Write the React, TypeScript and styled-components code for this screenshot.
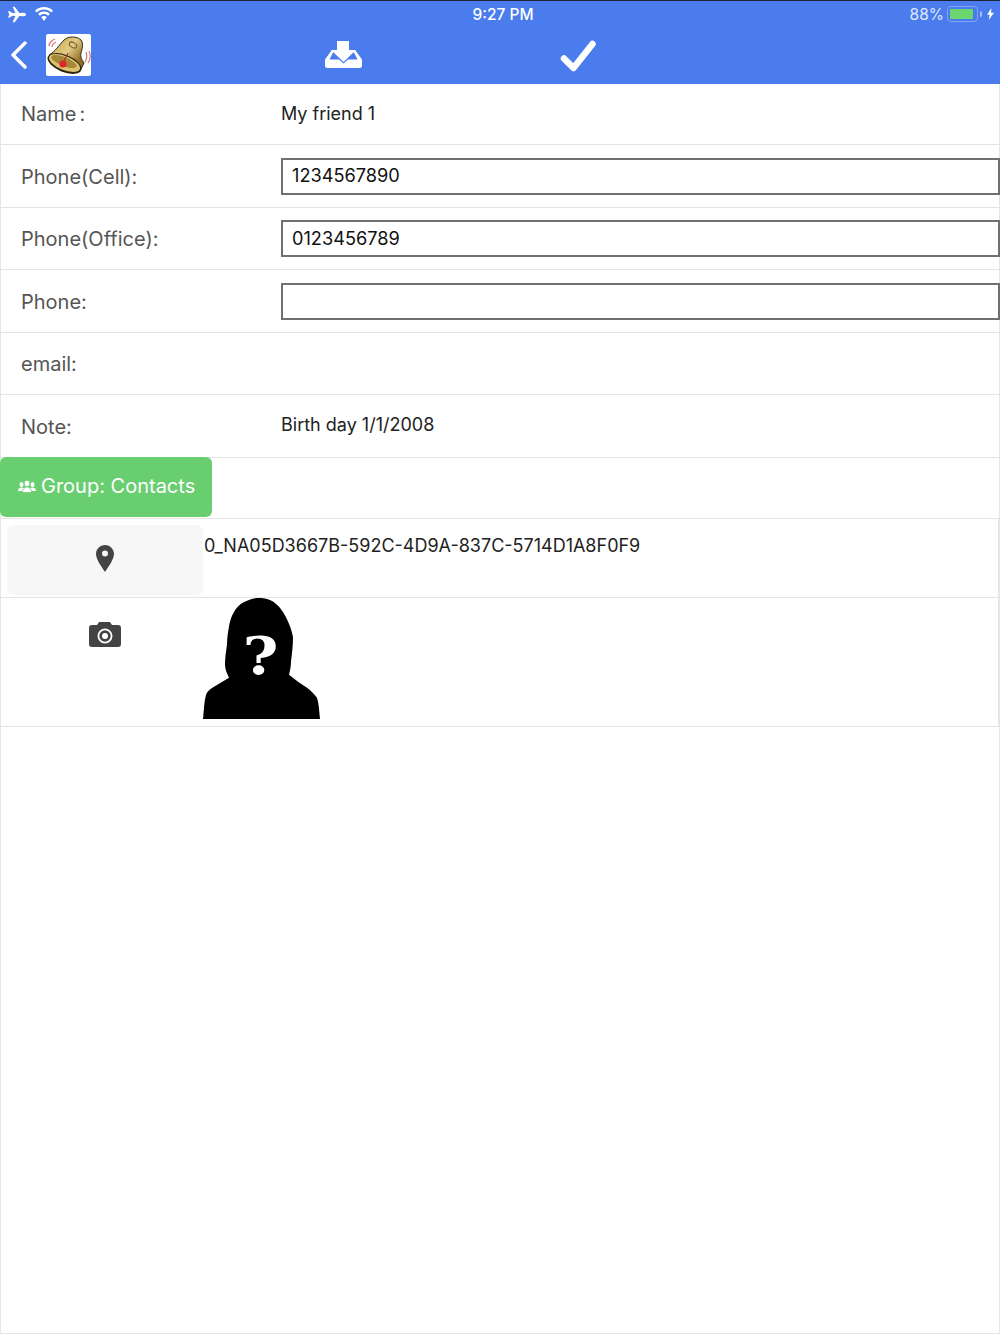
import styled, { createGlobalStyle } from 'styled-components';

const GlobalStyle = createGlobalStyle`
  html, body {
    margin: 0;
    padding: 0;
    background: #fff;
    font-family: "Inter", "Liberation Sans", sans-serif;
  }
  * {
    box-sizing: border-box;
  }
`;

const Page = styled.div`
  width: 1000px;
  height: 1334px;
  border-left: 1px solid #e6e6e6;
  border-right: 1px solid #e6e6e6;
  border-bottom: 1px solid #e6e6e6;
`;

const Header = styled.header`
  margin: 0 -1px;
  height: 84px;
  background-color: #4a7cee;
  border-top: 1px solid #1c2233;
  color: #fff;
`;

const StatusBar = styled.div`
  display: grid;
  grid-template-columns: 1fr auto 1fr;
  align-items: center;
  height: 26px;
  padding: 0 7px 0 8px;
  font-size: 15.5px;
`;

const StatusLeft = styled.div`
  display: flex;
  align-items: center;
  gap: 9px;
`;

const StatusTime = styled.div`
  margin-left: 5px;
  font-weight: 500;
`;

const StatusRight = styled.div`
  display: flex;
  align-items: center;
  justify-content: flex-end;
  gap: 4px;
  color: #dfe8fc;
`;

const BatteryLevel = styled.span`
  margin-right: -1px;
`;

const Battery = styled.div`
  position: relative;
  width: 31px;
  height: 16px;
  margin-right: 1px;
  padding: 2px;
  border: 1.5px solid #86a6f3;
  border-radius: 4px;

  &::before {
    content: '';
    display: block;
    width: 90%;
    height: 100%;
    background-color: #6cd66e;
    border-radius: 1px;
  }

  &::after {
    content: '';
    position: absolute;
    top: 3.5px;
    right: -5px;
    width: 2px;
    height: 6px;
    background-color: #a9c0f6;
    border-radius: 0 2px 2px 0;
  }
`;

const BoltIcon = styled.svg`
  width: 7px;
  height: 12px;
  margin-left: 4px;
  margin-right: -1px;
`;

const Toolbar = styled.div`
  display: flex;
  align-items: center;
  height: 57px;
  padding: 0 0 3px 10px;
`;

const BackIcon = styled.svg`
  width: 18px;
  height: 28px;
  margin: 2px 18px 0 0;
`;

const AppIcon = styled.svg`
  width: 45px;
  height: 42px;
  margin: 1px 234px 0 0;
`;

const SaveIcon = styled.svg`
  width: 37px;
  height: 27px;
  margin-right: 198px;
`;

const CheckIcon = styled.svg`
  width: 36px;
  height: 32px;
  margin-top: 3px;
`;

const FieldRow = styled.div<{ $first?: boolean }>`
  display: grid;
  grid-template-columns: 280px 1fr;
  align-items: center;
  height: ${(p) => (p.$first ? '61px' : '62.5px')};
  border-bottom: 1.5px solid #e4e4e4;
`;

const FieldLabel = styled.label<{ $first?: boolean }>`
  padding-left: 20px;
  padding-top: ${(p) => (p.$first ? '0' : '2px')};
  font-size: 20px;
  color: #555;
`;

const NameColon = styled.span`
  padding-left: 3px;
`;

const FieldValue = styled.div`
  margin-top: -2px;
  font-size: 18px;
  color: #222;
`;

const FieldInput = styled.input`
  display: block;
  width: 719px;
  height: 37px;
  margin-top: 1px;
  padding: 0 9px 2px;
  border: 2px solid #707070;
  border-radius: 0;
  outline: none;
  font-family: inherit;
  font-size: 18.2px;
  color: #111;
`;

const GroupButton = styled.button`
  display: flex;
  align-items: center;
  gap: 5px;
  width: 212px;
  height: 60px;
  margin: -1px 0 0 -1px;
  padding: 0 0 1px 18px;
  border: none;
  border-radius: 6px;
  background-color: #68ce70;
  font-family: inherit;
  font-size: 20px;
  color: #fff;
`;

const AttachTable = styled.div`
  margin-top: 1px;
  width: 998px;
  border-top: 1.5px solid #e4e4e4;
  border-right: 1.5px solid #e4e4e4;
`;

const AttachRow = styled.div<{ $height: number }>`
  display: grid;
  grid-template-columns: 202px 1fr;
  height: ${(p) => p.$height}px;
  border-bottom: 1.5px solid #e4e4e4;
`;

const IconCell = styled.div<{ $shaded?: boolean; $top: number }>`
  display: flex;
  justify-content: center;
  align-items: flex-start;
  margin: ${(p) => (p.$shaded ? '6px 0 2px 6px' : '0 0 0 6px')};
  padding-top: ${(p) => p.$top}px;
  border-radius: 6px;
  background-color: ${(p) => (p.$shaded ? '#f7f7f7' : 'transparent')};
`;

const FileName = styled.div`
  padding: 16px 0 0 1px;
  font-size: 18px;
  color: #222;
`;

const PortraitWrap = styled.div`
  position: relative;
  width: 119px;
  height: 121px;
  margin-left: -1px;
`;

const Silhouette = styled.svg`
  display: block;
  width: 119px;
  height: 121px;
`;

const Question = styled.span`
  position: absolute;
  top: 27px;
  left: 0;
  width: 117px;
  text-align: center;
  font-family: "DejaVu Serif", serif;
  font-weight: 700;
  font-size: 53px;
  line-height: 60px;
  color: #fff;
  transform: scaleX(1.15);
`;

const fields = [
  { label: 'Phone(Cell):', value: '1234567890' },
  { label: 'Phone(Office):', value: '0123456789' },
  { label: 'Phone:', value: '' },
];

const App = () => (
  <Page>
    <GlobalStyle />
    <Header>
      <StatusBar>
        <StatusLeft>
          <svg width="18" height="17" viewBox="0 0 19 17" fill="#fff">
            <path d="M0 5.500l1.200-.6 3.600 2.100 3-.1L5 .6 6.800 0l5.200 6.800 4.600-.1c1.600 0 2.400.8 2.400 1.800s-.8 1.800-2.400 1.800l-4.600-.1L6.800 17 5 16.400l2.800-6.400-3-.1-3.600 2.100-1.200-.6 1.500-3z" />
          </svg>
          <svg width="18" height="14" viewBox="0 0 18 14" fill="#fff">
            <path d="M9 0c3.500 0 6.500 1.300 9 3.700l-1.700 1.800C14.300 3.600 11.800 2.500 9 2.500S3.700 3.600 1.700 5.500L0 3.700C2.500 1.300 5.500 0 9 0z" />
            <path d="M9 4.600c2.200 0 4.200.8 5.800 2.300l-1.700 1.800C12 7.700 10.600 7.100 9 7.100s-3 .6-4.100 1.600L3.200 6.900C4.800 5.400 6.800 4.600 9 4.600z" />
            <path d="M9 9c1.100 0 2 .4 2.800 1.100L9 14l-2.800-3.900C7 9.400 7.900 9 9 9z" />
          </svg>
        </StatusLeft>
        <StatusTime>9:27 PM</StatusTime>
        <StatusRight>
          <BatteryLevel>88%</BatteryLevel>
          <Battery />
          <BoltIcon viewBox="0 0 8 14" fill="#fff">
            <path d="M5 0L0 8h3l-1 6 6-8.500H4.700z" />
          </BoltIcon>
        </StatusRight>
      </StatusBar>
      <Toolbar>
        <BackIcon viewBox="0 0 18 28" fill="none" stroke="#fff" strokeWidth="3.500" strokeLinecap="round" strokeLinejoin="round">
          <path d="M15 2L3 14l12 12" />
        </BackIcon>
        <AppIcon viewBox="0 0 45 42">
          <defs>
            <linearGradient id="bellBody" x1="0.1" y1="0.1" x2="0.9" y2="0.7">
              <stop offset="0" stopColor="#c9a850" />
              <stop offset="0.55" stopColor="#e0cb85" />
              <stop offset="1" stopColor="#8f6f28" />
            </linearGradient>
          </defs>
          <rect width="45" height="42" rx="2" fill="#fff" />
          {/* dome */}
          <path
            d="M3 21C9 18 13 11 18 6c4-4 13-4 17 0 3 4 1 9 0 13-1 4 1 7 3 10l-3 6-28-9z"
            fill="url(#bellBody)"
            stroke="#33270a"
            strokeWidth="1"
            strokeLinejoin="round"
          />
          {/* mouth */}
          <ellipse cx="18.500" cy="29.500" rx="18" ry="8.500" transform="rotate(22 18.500 29.500)" fill="#2f2409" />
          <ellipse cx="18.500" cy="29" rx="16.500" ry="7" transform="rotate(22 18.500 29)" fill="#d9c172" />
          <ellipse cx="18" cy="27.500" rx="13.500" ry="4.500" transform="rotate(22 18 27.500)" fill="#a5873a" />
          <ellipse cx="27" cy="11" rx="4" ry="2.500" transform="rotate(30 27 11)" fill="none" stroke="#6d5820" strokeWidth="1" />
          <path d="M17 29l5-10" stroke="#a81f26" strokeWidth="1" />
          <circle cx="17" cy="30" r="3.600" fill="#e0262c" />
          <path
            d="M3 12c0-3 3-6 6-7M6 13c0-2 2-4 4-5M40 18c1 3 1 7-1 10M43 17c2 4 1 9-1 12"
            fill="none"
            stroke="#d8757a"
            strokeWidth="1.200"
          />
        </AppIcon>
        <SaveIcon viewBox="0 0 37 27" fill="#fff">
          <path d="M12 0h12v9h7L18.500 21 6 9h6z" />
          <path d="M6.500 9.500H9l-4.500 9H14l4.500 4 4.500-4h9.500L28 9.500h2.500l6.500 9v6a2.500 2.500 0 0 1-2.500 2.500h-32A2.500 2.500 0 0 1 0 24.500v-6z" />
        </SaveIcon>
        <CheckIcon viewBox="0 0 36 32" fill="none" stroke="#fff" strokeWidth="6.500" strokeLinecap="round" strokeLinejoin="round">
          <path d="M4 18.500l9.500 9.500L32.500 4" />
        </CheckIcon>
      </Toolbar>
    </Header>

    <FieldRow $first>
      <FieldLabel $first>
        Name<NameColon>:</NameColon>
      </FieldLabel>
      <FieldValue>My friend 1</FieldValue>
    </FieldRow>
    {fields.map((field) => (
      <FieldRow key={field.label}>
        <FieldLabel>{field.label}</FieldLabel>
        <FieldInput defaultValue={field.value} />
      </FieldRow>
    ))}
    <FieldRow>
      <FieldLabel>email:</FieldLabel>
      <FieldValue />
    </FieldRow>
    <FieldRow>
      <FieldLabel>Note:</FieldLabel>
      <FieldValue>Birth day 1/1/2008</FieldValue>
    </FieldRow>

    <GroupButton>
      <svg width="18" height="13" viewBox="0 0 18 13" fill="#fff">
        <ellipse cx="3.500" cy="4.500" rx="2" ry="2.500" />
        <ellipse cx="14.500" cy="4.500" rx="2" ry="2.500" />
        <path d="M0 11c0-2.500 1.500-3.500 3.500-3.500S7 8.500 7 11zM11 11c0-2.500 1.500-3.500 3.500-3.500S18 8.500 18 11z" />
        <ellipse cx="9" cy="3.500" rx="2.800" ry="3.300" stroke="#68ce70" strokeWidth="0.800" />
        <path d="M4.500 12.500c0-3.500 2-5.500 4.500-5.500s4.500 2 4.500 5.500z" stroke="#68ce70" strokeWidth="0.800" />
      </svg>
      Group: Contacts
    </GroupButton>

    <AttachTable>
      <AttachRow $height={79.5}>
        <IconCell $shaded $top={20}>
          <svg width="18" height="27" viewBox="0 0 18 27" fill="#444">
            <path fillRule="evenodd" d="M9 0c5 0 9 4 9 9 0 5-5 12-9 18C5 21 0 14 0 9c0-5 4-9 9-9zm0 5.500a3 3 0 1 0 0 6 3 3 0 0 0 0-6z" />
          </svg>
        </IconCell>
        <FileName>0_NA05D3667B-592C-4D9A-837C-5714D1A8F0F9</FileName>
      </AttachRow>
      <AttachRow $height={128.5}>
        <IconCell $top={24}>
          <svg width="32" height="25" viewBox="0 0 32 25" fill="#444">
            <path fillRule="evenodd" d="M3 3h5l2-3h11l2 3h6a3 3 0 0 1 3 3v16a3 3 0 0 1-3 3H3a3 3 0 0 1-3-3V6a3 3 0 0 1 3-3zm13 3.500a7.500 7.500 0 1 0 0 15 7.500 7.500 0 0 0 0-15zm0 1.800a5.700 5.700 0 1 1 0 11.400 5.700 5.700 0 0 1 0-11.400zm0 2.700a3 3 0 1 0 0 6 3 3 0 0 0 0-6z" />
          </svg>
        </IconCell>
        <PortraitWrap>
          <Silhouette viewBox="0 0 119 120" preserveAspectRatio="none" fill="#000">
            <path d="M57 0C51 0 46 2 42 4c-4 2-8 6-10 10-3 5-4 9-5 14-1 6-2 12-2 18-1 7-2 13-2 20 0 5 2 9 4 13-5 3-10 6-15 9-4 2-7 5-8 8-2 7-2 15-3 24h117c-1-8-1-15-3-21-3-4-6-7-10-10-6-4-12-8-18-13 1-4 2-8 2-13 1-8 2-16 2-24-1-7-4-14-7-20-3-5-6-10-10-13-3-3-6-4-9-5-3-1-5-1-8-1z" />
          </Silhouette>
          <Question>?</Question>
        </PortraitWrap>
      </AttachRow>
    </AttachTable>
  </Page>
);

export default App;
